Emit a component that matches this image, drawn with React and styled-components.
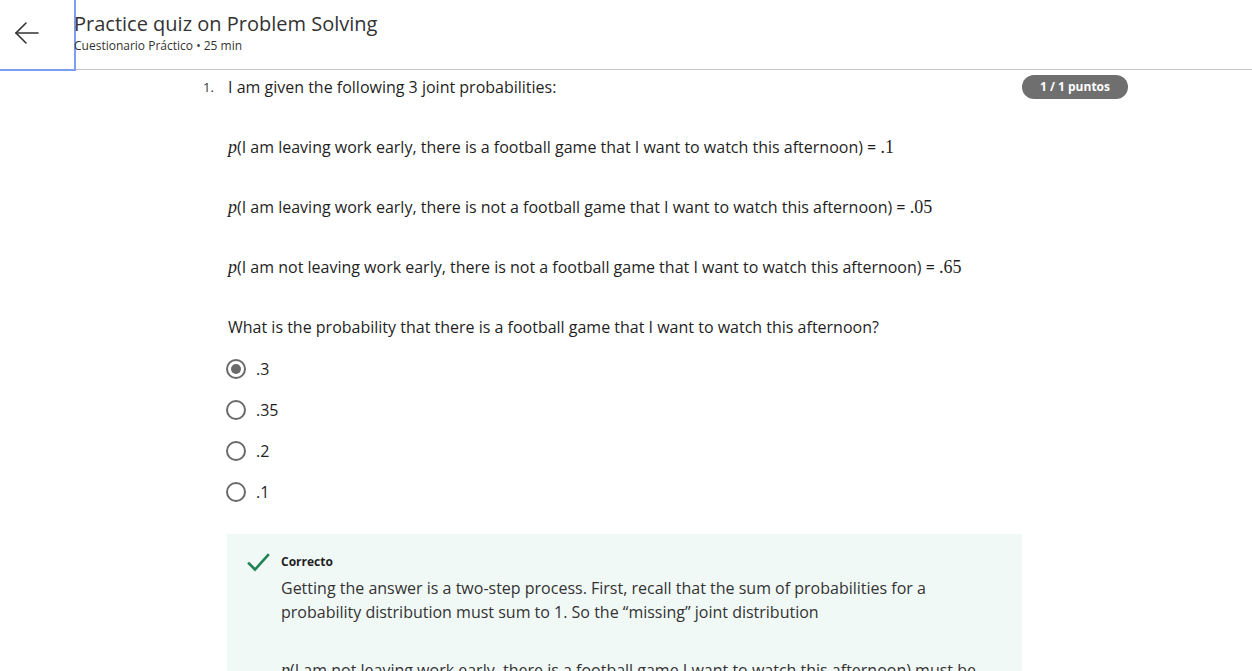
import React from "react";
import styled, { createGlobalStyle } from "styled-components";

const Global = createGlobalStyle`
  html, body { margin: 0; padding: 0; background: #fff; }
  body { font-family: "Open Sans", "Noto Sans", sans-serif; color: #1f1f1f; overflow: hidden; }
  * { box-sizing: border-box; }
`;

const Page = styled.div`
  width: 1252px;
  height: 671px;
  overflow: hidden;
`;

const Header = styled.header`
  display: flex;
  align-items: stretch;
  height: 70px;
  border-bottom: 1px solid #c4c4c4;
`;

const BackButton = styled.button`
  width: 76px;
  height: 71px;
  margin-bottom: -1px;
  border: none;
  border-right: 2px solid #7b9df3;
  border-bottom: 2px solid #7b9df3;
  background: #fff;
  display: flex;
  align-items: center;
  justify-content: flex-start;
  padding: 0 0 4px 14px;
  cursor: pointer;
`;

const TitleBlock = styled.div`
  display: flex;
  flex-direction: column;
  padding-top: 10px;
  margin-left: -2px;
`;

const Title = styled.h1`
  margin: 0;
  font-size: 20px;
  font-weight: 400;
  line-height: 28px;
  color: #333;
`;

const Subtitle = styled.div`
  font-size: 12px;
  line-height: 16px;
  color: #333;
`;

const Main = styled.main`
  padding: 5px 0 0 200px;
  width: 1128px;
`;

const QuestionRow = styled.div`
  display: flex;
  align-items: flex-start;
`;

const Number = styled.div`
  width: 28px;
  font-size: 13px;
  line-height: 24px;
  padding-left: 3px;
  color: #333;
`;

const Body = styled.div`
  flex: 1;
  min-width: 0;
`;

const TopLine = styled.div`
  display: flex;
  justify-content: space-between;
  align-items: center;
`;

const Text = styled.p`
  margin: 0;
  font-size: 16px;
  line-height: 24px;
  color: #1f1f1f;
`;

const Para = styled(Text)`
  margin-top: 36px;
`;

const Badge = styled.span`
  background: #6f6f6f;
  color: #fff;
  font-size: 12px;
  font-weight: 700;
  height: 24px;
  line-height: 24px;
  border-radius: 12px;
  width: 106px;
  text-align: center;
`;

const M = styled.span`
  font-family: "Liberation Serif", "DejaVu Serif", serif;
  font-size: 18px;
  font-style: ${(p) => (p.$italic ? "italic" : "normal")};
`;

const Options = styled.div`
  display: flex;
  flex-direction: column;
  gap: 17px;
  margin-top: 18px;
  margin-left: -2px;
`;

const Option = styled.label`
  display: flex;
  align-items: center;
  gap: 10px;
  font-size: 16px;
  line-height: 24px;
  color: #1f1f1f;
`;

const Radio = styled.span`
  width: 20px;
  height: 20px;
  border-radius: 50%;
  border: 2px solid #6a6a6a;
  display: flex;
  align-items: center;
  justify-content: center;
  &::after {
    content: "";
    width: 10px;
    height: 10px;
    border-radius: 50%;
    background: ${(p) => (p.$checked ? "#6a6a6a" : "transparent")};
  }
`;

const Feedback = styled.div`
  margin-top: 30px;
  margin-left: -1px;
  width: 795px;
  background: #f1f9f7;
  padding: 17px 20px 40px 20px;
  display: flex;
  gap: 10px;
`;

const FeedbackText = styled.div`
  display: flex;
  flex-direction: column;
  padding-top: 2px;
`;

const Label = styled.div`
  font-size: 12px;
  font-weight: 700;
  line-height: 18px;
  color: #1f1f1f;
  margin-bottom: 5px;
`;

const FeedbackPara = styled(Text)`
  color: #333;
`;

const FeedbackPara2 = styled(Text)`
  margin-top: 34px;
  color: #333;
`;

const opts = [".3", ".35", ".2", ".1"];

export default function App() {
  return (
    <Page>
      <Global />
      <Header>
        <BackButton aria-label="Back">
          <svg width="26" height="26" viewBox="0 0 26 26" fill="none" stroke="#333" strokeWidth="1.6" strokeLinecap="round">
            <path d="M24 13H2" />
            <path d="M12 3L2 13l10 10" />
          </svg>
        </BackButton>
        <TitleBlock>
          <Title>Practice quiz on Problem Solving</Title>
          <Subtitle>Cuestionario Práctico • 25 min</Subtitle>
        </TitleBlock>
      </Header>
      <Main>
        <QuestionRow>
          <Number>1.</Number>
          <Body>
            <TopLine>
              <Text>I am given the following 3 joint probabilities:</Text>
              <Badge>1 / 1 puntos</Badge>
            </TopLine>
            <Para>
              <M $italic>p</M>(I am leaving work early, there is a football game that I want to watch this afternoon) = <M>.1</M>
            </Para>
            <Para>
              <M $italic>p</M>(I am leaving work early, there is not a football game that I want to watch this afternoon) = <M>.05</M>
            </Para>
            <Para>
              <M $italic>p</M>(I am not leaving work early, there is not a football game that I want to watch this afternoon) = <M>.65</M>
            </Para>
            <Para>What is the probability that there is a football game that I want to watch this afternoon?</Para>
            <Options>
              {opts.map((o, i) => (
                <Option key={o}>
                  <Radio $checked={i === 0} />
                  {o}
                </Option>
              ))}
            </Options>
            <Feedback>
              <svg width="24" height="24" viewBox="0 0 24 24" fill="none" stroke="#1f8354" strokeWidth="2.6" strokeLinecap="square" style={{ flexShrink: 0 }}>
                <path d="M2 12.5l6 6L21 4" />
              </svg>
              <FeedbackText>
                <Label>Correcto</Label>
                <FeedbackPara>
                  Getting the answer is a two-step process. First, recall that the sum of probabilities for a probability distribution must sum to 1. So the “missing” joint distribution
                </FeedbackPara>
                <FeedbackPara2>
                  <M $italic>p</M>(I am not leaving work early, there is a football game I want to watch this afternoon) must be
                </FeedbackPara2>
              </FeedbackText>
            </Feedback>
          </Body>
        </QuestionRow>
      </Main>
    </Page>
  );
}
